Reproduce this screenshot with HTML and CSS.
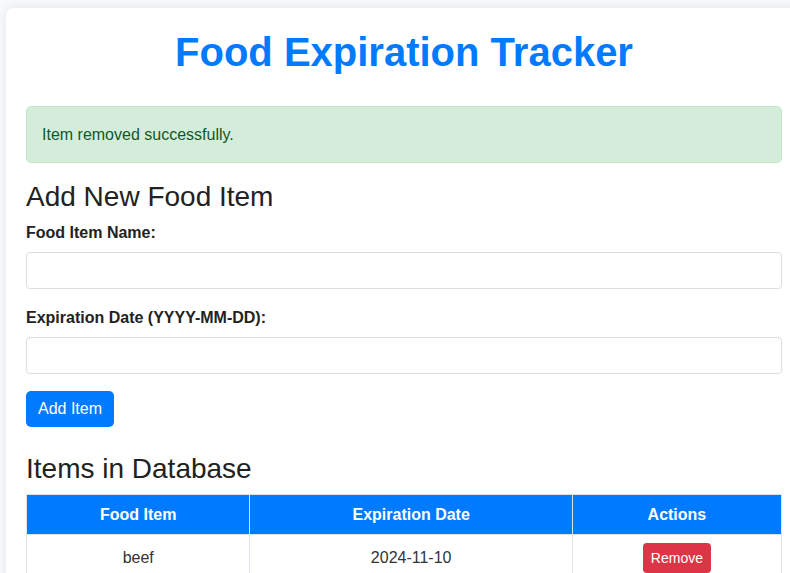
FILE: index.html
```html
<!DOCTYPE html>
<html lang="en">
<head>
<meta charset="utf-8">
<title>Food Expiration Tracker</title>
<link rel="stylesheet" href="styles.css">
</head>
<body>
<div class="container">
  <h1 class="title">Food Expiration Tracker</h1>
  <div class="alert">Item removed successfully.</div>

  <h2 class="section-title">Add New Food Item</h2>
  <form class="add-form">
    <div class="field">
      <label class="field-label" for="name">Food Item Name:</label>
      <input class="field-input" type="text" id="name">
    </div>
    <div class="field">
      <label class="field-label" for="date">Expiration Date (YYYY-MM-DD):</label>
      <input class="field-input" type="text" id="date">
    </div>
    <button class="btn-add" type="button">Add Item</button>
  </form>

  <h2 class="section-title">Items in Database</h2>
  <table class="items">
    <thead>
      <tr>
        <th class="col-name">Food Item</th>
        <th class="col-date">Expiration Date</th>
        <th class="col-actions">Actions</th>
      </tr>
    </thead>
    <tbody>
      <tr>
        <td>beef</td>
        <td>2024-11-10</td>
        <td><button class="btn-remove" type="button">Remove</button></td>
      </tr>
    </tbody>
  </table>
</div>
</body>
</html>
```

FILE: styles.css
```css
html {
  overflow-x: hidden;
  scrollbar-width: none;
}

body {
  margin: 0;
  padding: 8px 0 20px 6px;
  background: #f7f8fa;
  font-family: "Liberation Sans", Arial, sans-serif;
  color: #333;
}

.container {
  width: 796px;
  box-sizing: border-box;
  padding: 22px 20px 20px;
  background: #fff;
  border-radius: 8px;
  box-shadow: 0 0 10px rgba(0, 0, 0, 0.08);
}

.title {
  margin: 0 0 31px;
  font-size: 40px;
  font-weight: bold;
  line-height: normal;
  color: #007bff;
  text-align: center;
}

.alert {
  margin-bottom: 18px;
  padding: 15px;
  line-height: 25px;
  font-size: 16px;
  color: #155724;
  background: #d4edda;
  border: 1px solid #c3e6cb;
  border-radius: 5px;
}

.section-title {
  margin: 0 0 9px;
  font-size: 28px;
  font-weight: normal;
  line-height: normal;
  color: #222;
}

.add-form {
  margin: 0 0 26px;
}

.field {
  margin-bottom: 17px;
}

.field + .field {
  padding-top: 1px;
}

.field-label {
  display: block;
  padding-top: 2px;
  margin-bottom: 10px;
  font-size: 16px;
  font-weight: bold;
  color: #222;
}

.field-input {
  display: block;
  width: 100%;
  height: 37px;
  box-sizing: border-box;
  padding: 8px 10px;
  font-family: inherit;
  font-size: 16px;
  border: 1px solid #ddd;
  border-radius: 4px;
  background: #fff;
}

.btn-add {
  display: block;
  padding: 9px 12px;
  font-family: inherit;
  font-size: 16px;
  line-height: normal;
  color: #fff;
  background: #007bff;
  border: none;
  border-radius: 5px;
}

.items {
  width: 100%;
  border-collapse: collapse;
  font-size: 16px;
}

.items th,
.items td {
  border: 1px solid #dde3ea;
  text-align: center;
}

.items th {
  padding: 11px 10px 10px;
  background: #007bff;
  color: #fff;
  font-weight: bold;
}

.items td {
  padding: 8px;
  color: #333;
  vertical-align: middle;
}

.col-name { width: 29.6%; }
.col-date { width: 42.7%; }
.col-actions { width: 27.7%; }

.btn-remove {
  padding: 7px 8px;
  font-family: inherit;
  font-size: 14px;
  line-height: normal;
  color: #fff;
  background: #dc3545;
  border: none;
  border-radius: 4px;
}
```
